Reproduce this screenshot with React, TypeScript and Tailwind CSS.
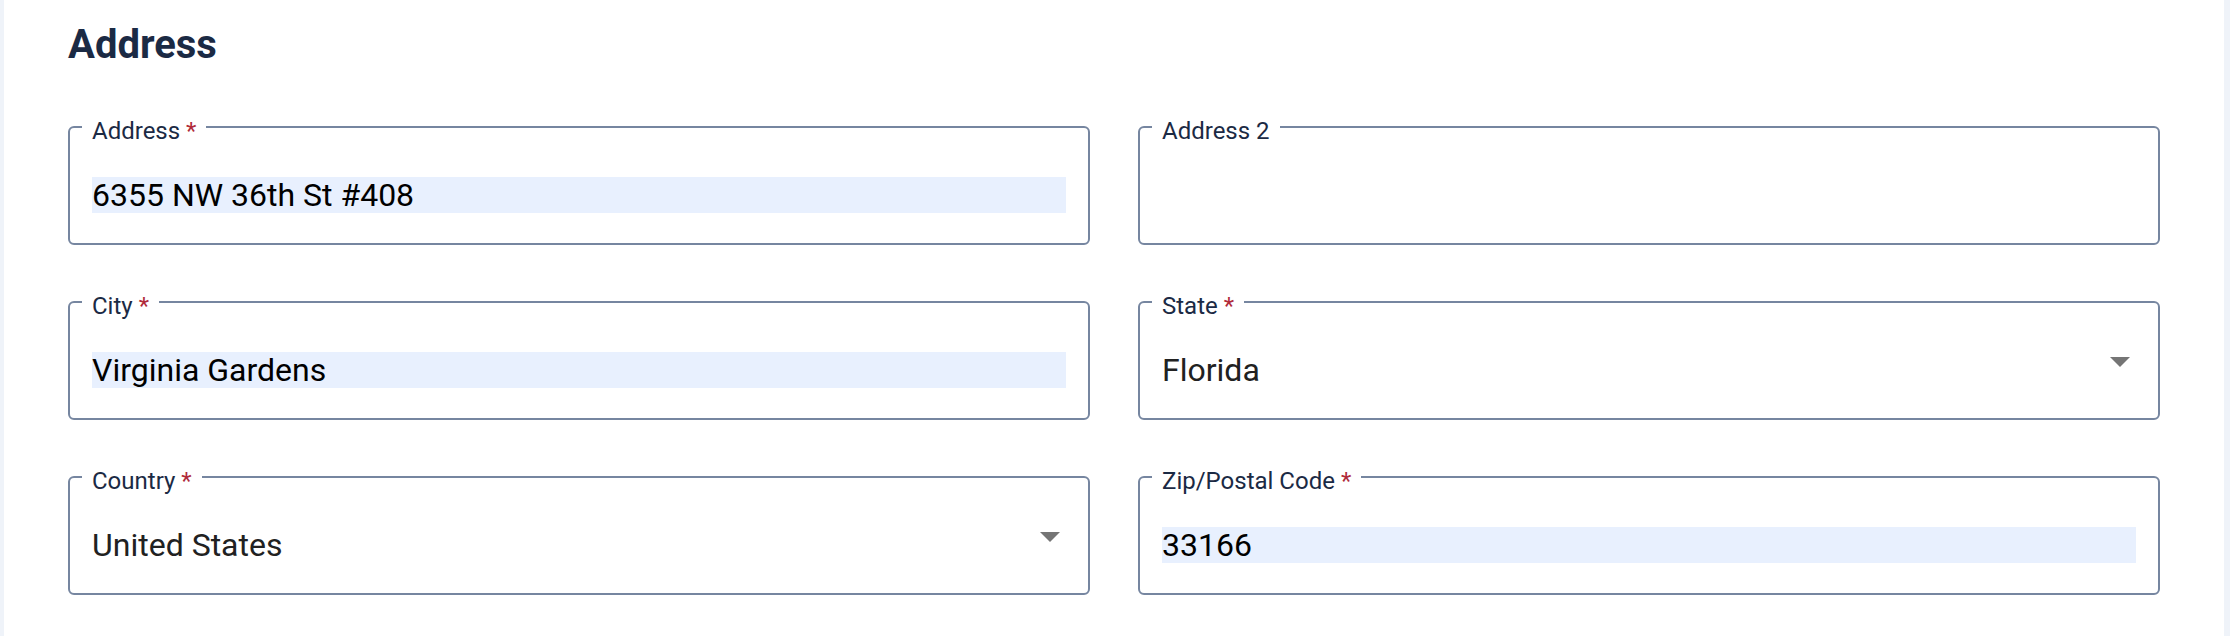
import React from 'react'

interface FieldProps {
  label: string
  required?: boolean
  value?: string
  select?: boolean
}

function Field({ label, required = false, value = '', select = false }: FieldProps) {
  return (
    <fieldset className="min-w-0 rounded-[6px] border-2 border-[#7686a0] px-[12px] pb-[30px]">
      <legend className="px-[10px] pt-[9px] text-[24px] leading-[24px] text-[#1b2a44]">
        {label}
        {required && <span className="text-[#b02a3a]"> *</span>}
      </legend>
      <div className="px-[10px] pt-[34px]">
        {select ? (
          <div className="flex items-start justify-between">
            <span className="text-[32px] leading-[36px] text-[#212121]">{value}</span>
            <svg width="20" height="10" viewBox="0 0 20 10" className="mr-[6px] mt-[5px]">
              <path d="M0 0 L20 0 L10 10 Z" fill="#757575" />
            </svg>
          </div>
        ) : (
          <input
            readOnly
            defaultValue={value}
            className={
              'block h-[36px] w-full text-[32px] leading-[36px] text-black outline-none ' +
              (value ? 'bg-[#e8f0fe]' : 'bg-white')
            }
          />
        )}
      </div>
    </fieldset>
  )
}

export default function App() {
  return (
    <div className="flex min-h-[636px] bg-[#eff3f9] font-['Roboto',sans-serif]">
      <div className="ml-[4px] mr-[6px] flex-1 bg-white px-[64px] pt-[21px]">
        <h2 className="text-[40px] font-bold leading-[48px] text-[#1b2a44]">Address</h2>
        <div className="mt-[41px] grid grid-cols-2 gap-x-[48px] gap-y-[40px]">
          <Field label="Address" required value="6355 NW 36th St #408" />
          <Field label="Address 2" />
          <Field label="City" required value="Virginia Gardens" />
          <Field label="State" required value="Florida" select />
          <Field label="Country" required value="United States" select />
          <Field label="Zip/Postal Code" required value="33166" />
        </div>
      </div>
    </div>
  )
}
